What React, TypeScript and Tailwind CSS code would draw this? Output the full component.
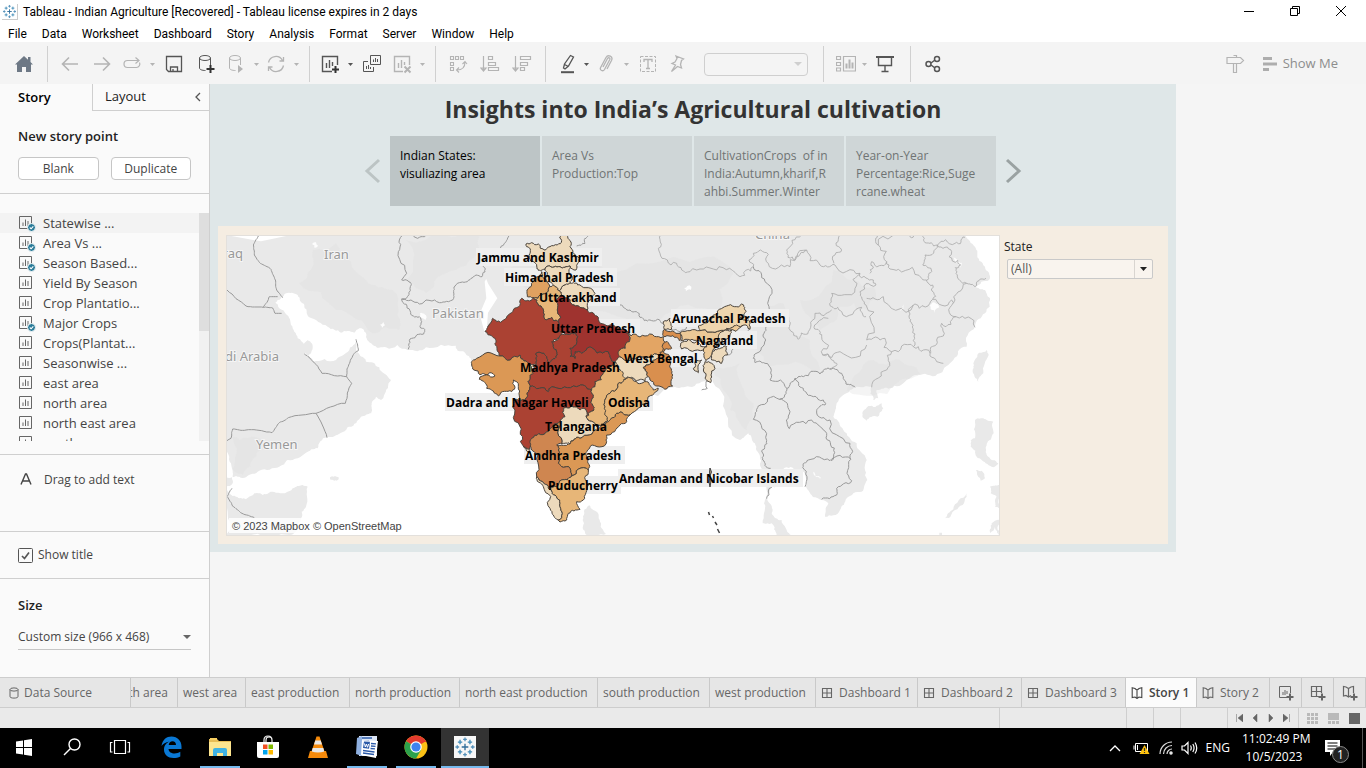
import React, { useState } from "react";
import type { ReactNode } from "react";

/* ---------- map geometry (three units per map pixel) ---------- */

type Pt = [number, number];

const parse = (s: string): Pt[] => s.trim().split(/\s+/).map((p) => p.split(",").map(Number) as Pt);

const noise = (a: number, b: number) => {
  const v = Math.sin(a * 12.9898 + b * 78.233) * 43758.5453;
  return v - Math.floor(v) - 0.5;
};

/* Adds small bends to a coarse line. The offset depends only on the two end points, so shared borders agree. */
function bend(a: Pt, b: Pt, depth: number, amount: number): Pt[] {
  const dx = b[0] - a[0];
  const dy = b[1] - a[1];
  const len = Math.hypot(dx, dy);
  if (depth === 0 || len < 7) return [b];
  const flip = a[0] < b[0] || (a[0] === b[0] && a[1] < b[1]) ? 1 : -1;
  const k = noise(a[0] + b[0], a[1] + b[1]) * amount * flip;
  const m: Pt = [Math.round((a[0] + b[0]) / 2 - dy * k), Math.round((a[1] + b[1]) / 2 + dx * k)];
  return [...bend(a, m, depth - 1, amount), ...bend(m, b, depth - 1, amount)];
}

function rough(s: string, ox: number, oy: number, closed = true, amount = 0.5): string {
  const pts = parse(s).map(([x, y]) => [x + ox, y + oy] as Pt);
  const all = closed ? [...pts, pts[0]] : pts;
  const out: Pt[] = [all[0]];
  for (let i = 1; i < all.length; i++) out.push(...bend(all[i - 1], all[i], 3, amount));
  return "M" + out.map((p) => p.join(",")).join("L") + (closed ? "Z" : "");
}

const WEST: Pt = [0, -15];
const NORTH: Pt = [732, -15];
const NEAST: Pt = [1182, 135];
const SOUTH: Pt = [762, 405];
const EAST: Pt = [1542, -15];

const LAND: [Pt, string][] = [
  [WEST, "0,15 790,15 790,395 735,392 718,370 695,362 690,347 600,352 545,360 480,352 440,345 422,325 412,298 400,295 385,308 345,308 305,290 250,262 235,225 215,195 180,190 165,205 148,218 175,245 195,285 215,325 238,372 262,395 330,390 370,360 388,335 398,370 420,395 460,412 495,450 480,480 465,510 450,500 437,520 436,550 405,560 370,590 345,608 303,622 275,655 240,668 185,690 160,710 100,722 60,742 20,742 15,700 0,650"],
  [WEST, "236,338 246,330 257,340 255,370 243,378 236,366"],
  [WEST, "0,775 30,800 60,808 85,790 110,795 150,788 200,775 230,765 245,770 240,830 225,865 190,915 0,915"],
  [WEST, "0,742 18,742 20,760 0,770"],
  [WEST, "312,742 338,742 338,748 312,748"],
  [EAST, "-790,15 675,15 700,45 712,70 735,110 747,150 708,172 720,178 735,180 750,205 735,250 705,290 680,350 640,390 600,430 540,435 500,450 450,475 410,480 415,505 400,510 395,470 345,472 330,480 290,520 280,560 310,600 350,640 380,690 382,750 365,785 320,805 300,840 255,860 265,820 245,810 215,795 195,770 185,722 140,712 105,740 90,780 82,810 95,850 125,870 152,915 110,915 95,880 68,880 72,820 80,780 68,720 60,680 45,640 25,610 0,630 -45,540 -84,444 -144,471 -195,471 -400,440 -600,400 -790,395"],
  [EAST, "368,545 385,528 425,520 430,535 412,560 380,572 368,562"],
  [EAST, "740,360 746,375 730,430 715,455 698,425 700,400 718,368"],
  [EAST, "705,570 730,565 760,575 755,620 738,650 745,680 775,700 760,712 725,690 710,680 692,650 692,630 705,625"],
  [EAST, "708,720 725,722 735,745 722,752"],
  [EAST, "615,865 640,838 680,790 680,800 645,840"],
  [EAST, "750,770 778,765 778,835 765,830 770,800 752,790"],
  [EAST, "755,880 778,870 778,915 765,890 750,910"],
  [EAST, "598,908 606,908 606,915 598,915"],
  [SOUTH, "314,418 328,406 340,420 360,455 378,492 320,495 312,460"],
];

const SHADE: [Pt, string][] = [
  [WEST, "260,60 330,40 420,150 500,180 520,300 440,310 330,240 220,160"],
  [WEST, "20,620 110,630 90,680 50,735 20,720"],
  [WEST, "540,30 760,20 690,120 600,190 540,150"],
  [EAST, "-700,120 -500,230 -240,270 -60,240 -20,130 -200,80 -480,60"],
  [EAST, "60,250 130,220 210,330 240,420 90,410 30,330"],
  [EAST, "320,480 400,390 480,390 540,430 470,460"],
  [EAST, "280,120 400,170 380,240 300,230 240,300 180,210"],
  [EAST, "-80,420 0,400 40,520 20,600 -30,540"],
];

const LAKES: [Pt, string][] = [
  [WEST, "258,42 268,36 276,48 266,54"],
  [WEST, "582,250 602,262 598,270 588,264"],
  [WEST, "462,284 472,276 477,286 468,294"],
  [NEAST, "192,24 214,20 212,30 198,34"],
  [EAST, "570,225 585,218 598,232 585,248"],
  [EAST, "455,232 480,242 492,222 490,238 472,244"],
  [EAST, "640,80 665,98 660,115 648,95"],
  [EAST, "220,725 242,742 240,748 226,738"],
];

const COUNTRY_LINES: [Pt, string][] = [
  [WEST, "100,15 82,45 85,75 103,100 135,118 148,150 152,180 170,203"],
  [WEST, "3,180 60,228 112,232 140,234 147,250 167,250"],
  [WEST, "112,232 130,200 155,200"],
  [WEST, "235,372 250,382 288,430 362,440 368,405 385,370 397,362 390,328"],
  [WEST, "362,440 377,460 358,520 270,550 187,563 160,578 138,608 122,606 60,600 20,597 15,625 3,632"],
  [WEST, "270,550 303,623"],
  [WEST, "3,800 18,775"],
  [WEST, "3,800 20,828 48,850 85,863"],
  [WEST, "535,15 517,65 527,150 553,157 553,170 527,207 580,222 640,218 683,205 685,178 700,158 735,145 768,140 772,110 800,80 835,40 850,15"],
  [WEST, "527,207 552,242 580,260 582,290 596,298 593,312 557,325 547,358"],
  [WEST, "560,15 570,23 590,20 600,15"],
  [NORTH, "320,48 345,40 352,15"],
  [NORTH, "365,190 420,200 450,225 480,240 510,262 540,270 580,280 600,276"],
  [NEAST, "155,150 200,140 240,140"],
  [NEAST, "322,225 345,180 390,145"],
  [NEAST, "245,330 262,325 258,305 270,300"],
  [EAST, "40,110 75,155 87,230 78,290 77,330 45,372 45,398 75,400 90,450 140,475 118,508 55,528 40,568 80,632 65,662 68,690 92,715"],
  [EAST, "140,475 165,445 190,440 240,432 275,415 310,440 318,462 345,472"],
  [EAST, "165,445 190,475 220,500 250,510 255,525 230,542 270,570 330,640 332,688 270,692 205,690 188,712 195,770"],
  [EAST, "118,508 150,545 148,596 215,570 250,600 272,645 273,692"],
  [EAST, "332,688 335,752 290,775 290,795 245,808"],
  [EAST, "105,770 80,806"],
];

const PROVINCE_LINES: [Pt, string][] = [
  [EAST, "-235,15 -240,70 -190,100 -150,125 -70,120 0,140 40,110 40,70 62,60 85,100 150,110 200,60 240,105 285,105 360,130 400,150 408,165 360,185 378,225 380,330 435,325 455,365 520,350 570,370 610,400"],
  [EAST, "185,15 140,60 165,90 200,62"],
  [EAST, "300,15 305,60 282,100"],
  [EAST, "415,15 415,45 440,95 395,95 390,130"],
  [EAST, "415,45 510,20 525,15"],
  [EAST, "440,95 475,118 545,145 578,165 578,208 525,222 508,265 520,300 520,350"],
  [EAST, "545,15 555,38 592,45 645,40 675,22"],
  [EAST, "592,45 555,75 548,105 575,125 560,150"],
  [EAST, "592,45 635,65 662,105 648,130 680,160 705,170"],
  [EAST, "578,208 635,210 648,260 705,292"],
  [EAST, "680,160 640,220"],
  [EAST, "648,260 605,280 590,330 572,370"],
  [EAST, "360,130 345,175 275,190 275,230 305,245 365,232 378,260"],
  [EAST, "380,205 430,200 520,225"],
  [EAST, "275,240 225,250 205,305 175,328 150,300 140,260"],
  [EAST, "265,265 222,292 245,320 248,375 300,365 380,345"],
  [EAST, "248,375 290,400 270,418"],
  [EAST, "455,365 440,420 395,472"],
  [EAST, "705,170 738,145"],
];

const STATES: [Pt, string, string][] = [
  [NORTH, "#eddabc", "168,42 185,38 205,42 222,60 240,50 262,45 275,32 272,15 292,15 300,50 308,68 328,85 318,120 300,108 270,110 235,108 225,118 200,115 185,95 180,70"],
  [NORTH, "#eddabc", "235,108 270,110 300,108 306,150 285,165 268,182 250,165 228,150 225,118"],
  [NORTH, "#e0a160", "215,125 228,150 240,170 215,195 190,203 172,200 185,165 205,140"],
  [NORTH, "#e7b678", "190,203 215,195 240,170 250,165 268,182 275,195 262,240 272,262 265,275 245,262 230,270 218,235 205,225"],
  [NORTH, "#eddabc", "285,165 305,160 330,165 375,190 355,215 352,240 330,232 300,210 275,195 268,182"],
  [NORTH, "#ab4233", "155,205 190,203 205,225 218,235 230,270 245,262 265,275 275,305 250,330 250,345 262,375 240,398 222,370 198,370 198,405 180,405 150,375 90,378 75,340 60,315 45,305 62,280 68,265 80,275 100,270 130,240"],
  [NORTH, "#ab4233", "250,345 245,335 290,312 318,310 320,330 300,355 300,380 315,385 315,365 350,355 415,365 430,395 400,430 375,455 365,480 320,470 245,470 235,485 180,470 180,440 198,405 198,370 222,370 240,398 262,375"],
  [NORTH, "#9f332f", "275,195 300,210 330,232 352,240 385,262 420,285 465,300 480,320 478,335 448,360 445,395 430,395 415,365 350,355 315,365 315,385 300,380 300,355 320,330 318,310 290,312 275,305 265,275 272,262 262,240"],
  [NORTH, "#db9855", "5,405 20,385 90,378 150,375 180,405 190,430 180,440 180,470 172,500 152,512 140,455 130,450 125,485 85,498 50,475 28,448 75,438 60,428 30,434 12,420"],
  [SOUTH, "#ab4233", "150,50 205,65 215,50 290,50 335,60 335,90 342,120 318,140 312,115 275,108 250,115 255,140 240,155 220,165 200,185 155,205 150,235 130,228 120,170 105,90 122,92 142,80"],
  [SOUTH, "#e7b678", "370,10 400,-25 430,0 440,25 415,40 390,70 375,110 380,155 350,170 318,140 342,120 335,90 335,60 345,35"],
  [NEAST, "#eddabc", "0,230 60,228 110,222 120,228 105,240 70,262 85,290 75,305 45,300 15,295 0,270 -15,245"],
  [NEAST, "#e3a564", "20,160 75,168 130,170 135,205 120,228 110,222 60,228 0,230 -5,215 28,185"],
  [SOUTH, "#e7b678", "440,25 460,32 500,35 520,60 535,55 500,95 450,135 410,130 385,155 375,110 390,70 415,40"],
  [NEAST, "#d98f4e", "130,190 138,185 155,205 130,215 150,245 155,280 158,318 110,318 90,300 85,290 70,262 105,240 120,228"],
  [NEAST, "#d98f4e", "133,148 180,160 178,182 135,170"],
  [NEAST, "#eddabc", "130,125 150,115 155,148 133,148"],
  [NEAST, "#ecc997", "180,158 240,152 300,152 320,145 350,125 385,115 370,135 320,150 290,185 275,225 258,242 250,210 260,200 235,182 182,182"],
  [NEAST, "#eed5ad", "240,152 235,138 265,125 280,105 320,78 365,72 378,95 360,112 385,120 390,148 350,135 320,145 300,152"],
  [NEAST, "#eddabc", "182,190 230,185 260,200 250,210 185,207"],
  [NEAST, "#eddabc", "295,175 335,150 330,165 300,195 285,200"],
  [NEAST, "#eddabc", "285,208 320,200 322,225 305,250 275,240"],
  [NEAST, "#eddabc", "255,245 275,250 285,265 272,308 255,295"],
  [NEAST, "#eddabc", "225,245 245,240 235,278 220,265"],
  [SOUTH, "#eddabc", "275,108 312,115 318,140 350,170 380,155 355,182 300,205 270,222 245,222 240,155 255,140 250,115"],
  [SOUTH, "#db9855", "450,135 420,165 380,195 380,215 330,230 320,260 325,300 275,318 270,295 235,280 235,255 230,225 270,222 300,205 355,182 385,155 410,130"],
  [SOUTH, "#cf8650", "240,155 245,222 230,225 235,255 235,280 270,295 275,318 245,330 230,350 205,350 170,320 155,240 155,205 200,185 220,165"],
  [SOUTH, "#eddabc", "170,320 205,350 225,375 240,410 235,450 210,415 190,350"],
  [SOUTH, "#e7b678", "325,300 325,345 310,390 290,395 300,418 265,430 260,450 240,456 235,450 240,410 225,375 205,350 230,350 245,330 275,318"],
  [SOUTH, "#eddabc", "130,228 150,235 152,258 138,240"],
];

/* text, left, baseline, halo width */
const LABELS: [string, number, number, number][] = [
  ["Jammu and Kashmir", 477, 262, 124],
  ["Himachal Pradesh", 505, 282, 111],
  ["Uttarakhand", 539, 302, 80],
  ["Uttar Pradesh", 551, 333, 88],
  ["Arunachal Pradesh", 672, 323, 116],
  ["Nagaland", 696, 345, 60],
  ["West Bengal", 624, 363, 79],
  ["Madhya Pradesh", 520, 372, 104],
  ["Dadra and Nagar Haveli", 446, 407, 146],
  ["Odisha", 608, 407, 44],
  ["Telangana", 545, 431, 65],
  ["Andhra Pradesh", 525, 460, 99],
  ["Andaman and Nicobar Islands", 619, 483, 183],
  ["Puducherry", 548, 490, 72],
];

function StateMap() {
  return (
    <svg viewBox="226 235 774 301" className="block w-full bg-white outline -outline-offset-1 outline-[#e3e0dc]" role="img" aria-label="Crop area by Indian state">
      <g transform="translate(226 235) scale(0.33333)">
        {LAND.map(([o, s], i) => <path key={i} d={rough(s, o[0], o[1], true, 0.35)} fill="#e9e9e9" />)}
        {SHADE.map(([o, s], i) => <path key={i} d={rough(s, o[0], o[1], true, 0.4)} fill="#dfdfdf" opacity="0.35" />)}
        {LAKES.map(([o, s], i) => <path key={i} d={rough(s, o[0], o[1])} fill="#fdfdfd" />)}
        <g fill="none" stroke="#ababab" strokeWidth="2.500">
          {PROVINCE_LINES.map(([o, s], i) => <path key={i} d={rough(s, o[0], o[1], false, 0.7)} />)}
        </g>
        <g fill="none" stroke="#999" strokeWidth="3">
          {COUNTRY_LINES.map(([o, s], i) => <path key={i} d={rough(s, o[0], o[1], false, i < 8 ? 0.12 : 0.5)} />)}
        </g>
      </g>
      <g fill="#999" stroke="#f5f5f5" strokeWidth="2" paintOrder="stroke" fontFamily="'Noto Sans', sans-serif" fontSize="13">
        <text x="243" y="258" textAnchor="end">Iraq</text>
        <text x="324" y="259">Iran</text>
        <text x="432" y="318">Pakistan</text>
        <text x="279" y="361" textAnchor="end">Saudi Arabia</text>
        <text x="256" y="449">Yemen</text>
        <text x="755" y="239">China</text>
      </g>
      {LABELS.map(([t, x, y, w]) => <rect key={t} x={x - 1} y={y - 14} width={w + 2} height="18" fill="#efefef" />)}
      <g transform="translate(226 235) scale(0.33333)" stroke="#4b443c" strokeWidth="3" strokeLinejoin="round">
        {STATES.map(([o, c, s], i) => <path key={i} d={rough(s, o[0], o[1])} fill={c} />)}
      </g>
      <g fill="#a9987f" stroke="#444" strokeWidth="1">
        <path d="M710 468l1.500 4-1.500 4 1 5-1 6-1-5 1-5-.5-5z" />
        <path d="M708.500 512l1 3M712.500 516l1 2M715 522l2 3M717.500 529l2 4" strokeWidth="1.500" />
      </g>
      <g fontFamily="'Open Sans', sans-serif" fontSize="12" fontWeight="700" fill="#000">
        {LABELS.map(([t, x, y]) => <text key={t} x={x} y={y}>{t}</text>)}
      </g>
      <rect x="229" y="518" width="176" height="15" fill="#fff" opacity="0.8" />
      <text x="232" y="530" fontFamily="'Liberation Sans', sans-serif" fontSize="11" fill="#444">© 2023 Mapbox © OpenStreetMap</text>
    </svg>
  );
}

/* ---------- icons ---------- */

function TableauMark({ className }: { className: string }) {
  const plus = (x: number, y: number, r: number, c: string) => <path key={`${x}${y}`} d={`M${x - r} ${y}h${2 * r}M${x} ${y - r}v${2 * r}`} stroke={c} />;
  return (
    <svg viewBox="0 0 20 20" className={className} strokeWidth="1.200" fill="none" aria-hidden="true">
      {plus(10, 10, 3, "#2f6c99")}
      {plus(10, 3, 1.7, "#5591ba")}{plus(10, 17, 1.7, "#5591ba")}
      {plus(3, 10, 1.7, "#5591ba")}{plus(17, 10, 1.7, "#5591ba")}
      {plus(5.5, 5.5, 2, "#3f8bb8")}{plus(14.5, 5.5, 2, "#3f8bb8")}
      {plus(5.5, 14.5, 2, "#3f8bb8")}{plus(14.5, 14.5, 2, "#3f8bb8")}
    </svg>
  );
}

const Svg = ({ children, size = 20, className = "" }: { children: ReactNode; size?: number; className?: string }) => (
  <svg width={size} height={size} viewBox={`0 0 ${size} ${size}`} fill="none" stroke="currentColor" className={`shrink-0 ${className}`} aria-hidden="true">{children}</svg>
);

const Caret = ({ on = false, narrow = false }: { on?: boolean; narrow?: boolean }) => (
  <span className={`flex justify-center ${narrow ? "w-2" : "w-3"} ${on ? "text-[#555]" : "text-[#b4b4b4]"}`}>
    <svg width="5" height="3" viewBox="0 0 5 3" aria-hidden="true"><path d="M0 0h5L2.500 3z" fill="currentColor" /></svg>
  </span>
);

const Tool = ({ label, on = false, w = "w-8", children }: { label: string; on?: boolean; w?: string; children: ReactNode }) => (
  <button type="button" aria-label={label} className={`flex h-9 shrink-0 items-center justify-center ${w} ${on ? "text-[#555]" : "text-[#b4b4b4]"}`}>
    <Svg>{children}</Svg>
  </button>
);

const Sep = ({ m = "mx-1.5" }: { m?: string }) => <span className={`h-9 w-px shrink-0 bg-[#d0d0d0] ${m}`} />;

const Cylinder = () => (
  <g><ellipse cx="9" cy="4" rx="5.500" ry="2.500" /><path d="M3.500 4v10c0 1.500 2.500 2.500 6 2.500M14.500 4v7" /></g>
);

function Toolbar() {
  return (
    <div role="toolbar" className="flex h-[42px] shrink-0 items-center bg-[#f4f4f4] pt-0.5">
      <button type="button" aria-label="Start page" className="flex h-9 w-[47px] items-center justify-center">
        <Svg><path d="M1 10.500L10 2l4 3.700V3h2.500v5l2.500 2.500h-2V18h-5v-5H8v5H3v-7.500z" fill="#6d7885" stroke="none" /></Svg>
      </button>
      <Sep m="mr-1.5" />
      <Tool label="Undo"><path d="M18 10H3M9 3.500L2.500 10 9 16.500" strokeWidth="1.600" /></Tool>
      <Tool label="Redo"><path d="M2 10h15M11 3.500l6.500 6.500L11 16.500" strokeWidth="1.600" /></Tool>
      <Tool label="Replay" w="w-7"><path d="M17 6.500H5.500a3.500 3.500 0 000 7h9a3.500 3.500 0 003-5M13.500 3.500l3.500 3-3.500 3" strokeWidth="1.200" /></Tool>
      <Caret />
      <Tool label="Save" on><path d="M2.500 2.500h15v15h-13l-2-2zM6.500 17v-4h7v4M9 15v2" strokeWidth="1.300" /></Tool>
      <Tool label="New data source" on><Cylinder /><path d="M14.500 11v8M10.500 15h8" strokeWidth="2" stroke="#333" /></Tool>
      <Tool label="Pause updates" w="w-7"><Cylinder /><path d="M12 11v8l5-4z" fill="currentColor" stroke="none" /></Tool>
      <Caret />
      <Tool label="Run update" w="w-7"><path d="M2.500 8.500a7.500 7.500 0 0114-2M17.500 11.500a7.500 7.500 0 01-14 2M17.500 3v4h-4M2.500 17v-4h4" strokeWidth="1.300" /></Tool>
      <Caret />
      <Sep m="mr-1.5 ml-[7px]" />
      <Tool label="New worksheet" on w="w-7"><path d="M12 17.500H2.500v-15h15V11M6.500 14V9M9.500 14V6M12.500 12V8" strokeWidth="1.400" /><path d="M15.500 12v7M12 15.500h7" strokeWidth="2" stroke="#333" /></Tool>
      <Caret on />
      <Tool label="Duplicate" on><path d="M8.500 1.500h10v9h-10zM6 7.500H1.500v10h10V13M11.500 8V5.500M13.500 8V4M15.500 8V5M4.500 15v-3M6.500 15v-4M8.500 15v-2" /></Tool>
      <Tool label="Clear sheet" w="w-7"><path d="M11 17.500H2.500v-15h15V11M6.500 14V9M9.500 14V6M12.500 11V8" strokeWidth="1.400" /><path d="M12.500 12.500l6 6M18.500 12.500l-6 6" strokeWidth="2" /></Tool>
      <Caret />
      <Sep m="mr-1.5 ml-[7px]" />
      <Tool label="Swap rows and columns"><path d="M2.500 2.500h3v3h-3zM7.500 2.500h3v3h-3zM12.500 2.500h3v3h-3zM2.500 8.500h3v3h-3zM2.500 13.500h3v3h-3zM17 8c0 5-3 8-8 8M14.500 10L17 7.500 19 10M11 13.500L8.500 16l2.500 2.500" strokeWidth="1.100" /></Tool>
      <Tool label="Sort ascending"><path d="M3.500 2v14M1 14l2.500 3L6 14zM8.500 2.500h4v3h-4zM8.500 8.500h7v3h-7zM8.500 13.500h10v3h-10z" strokeWidth="1.200" /></Tool>
      <Tool label="Sort descending"><path d="M3.500 2v14M1 14l2.500 3L6 14zM8.500 2.500h10v3h-10zM8.500 8.500h7v3h-7zM8.500 13.500h4v3h-4z" strokeWidth="1.200" /></Tool>
      <Sep m="mr-2 ml-[7px]" />
      <Tool label="Highlight" on w="w-7"><path d="M12.500 1.500l3 1.500-5 9-3.500 3-1.500-1 1-4zM6.500 10.500l4 2" strokeWidth="1.300" /><path d="M3 18.200h13" strokeWidth="2" /></Tool>
      <Caret on narrow />
      <Tool label="Group members"><path d="M7 13l4.500-8.500c1-1.500 3-.5 2.300 1L8.500 15.500c-1.500 2.500-5 .8-4-1.800L10 3.500c2-3.500 7.500-1 5.500 3L11 15" strokeWidth="1.300" /></Tool>
      <Caret narrow />
      <Tool label="Show mark labels" w="w-9"><path d="M2.500 2.500h15v15h-15z" strokeDasharray="3 1.500" /><path d="M6 8V5.500h8V8M10 5.500v9M8 14.500h4" strokeWidth="1.300" /></Tool>
      <Tool label="Fix axes" w="w-6"><path d="M8 2l7.500 3-2 1.500-1 4 1 3.500-4-1.500-6 5 4-6.500-3.500-1.500 3-1.500 2-3.500z" strokeWidth="1.300" /></Tool>
      <div className="ml-3.5 flex h-[23px] w-[104px] shrink-0 items-center rounded-sm border border-[#cfcfcf]">
        <select aria-label="Fit" disabled className="h-full flex-1 appearance-none bg-transparent"><option></option></select>
        <svg className="mr-[5px]" width="8" height="4" viewBox="0 0 8 4" aria-hidden="true"><path d="M0 0h8L4 4z" fill="#cfcfcf" /></svg>
      </div>
      <Sep m="mr-2 ml-[15px]" />
      <Tool label="Show or hide cards" w="w-7"><path d="M.5 2.500h4v3h-4zM.5 8.500h4v3h-4zM.5 14h4v3h-4zM7.500 2.500h12v14.500h-12z" strokeWidth="1.200" /><path d="M10.500 14.500v-5M13.500 14.500v-9M16.500 14.500v-6" strokeWidth="2" /></Tool>
      <Caret narrow />
      <Tool label="Presentation mode" on w="w-[34px]"><path d="M1 3h18" strokeWidth="2" /><path d="M3.500 3v8.500h13V3M10 12v5M6.500 17.500h7" strokeWidth="1.400" /></Tool>
      <Sep m="mr-1.5 ml-2" />
      <Tool label="Share" on><g strokeWidth="1.500"><circle cx="5.500" cy="10" r="2.500" /><circle cx="14" cy="5" r="2.500" /><circle cx="14" cy="15" r="2.500" /><path d="M8 9l4-3M8 11l4 3" /></g></Tool>
      <div className="flex-1" />
      <Tool label="Guided help"><path d="M8.500 1.500h3v2M2 3.500h13.500l3 3-3 3H2zM8.500 9.500v9h3v-9" strokeWidth="1.200" /></Tool>
      <button type="button" className="mr-7 ml-3 flex items-center gap-1.5 text-[13px] text-[#8d8d8d]">
        <svg width="14" height="14" viewBox="0 0 14 14" fill="#adadad" aria-hidden="true"><path d="M0 0h9v3H0zM0 5.500h14v3H0zM0 11h6v3H0z" /></svg>
        Show Me
      </button>
    </div>
  );
}

const SheetIcon = ({ used = false }: { used?: boolean }) => (
  <Svg size={18} className="text-[#666]">
    <path d="M1.500 2.500h12v12h-12z" /><path d="M5 12V8.500M7.500 12V5.500M10 12V7" />
    {used && <><circle cx="13.500" cy="13.500" r="4" fill="#2d7d9a" stroke="#fafafa" /><path d="M11.800 13.500l1.300 1.300 2.200-2.500" stroke="#fff" strokeWidth="1.100" /></>}
  </Svg>
);
const GridIcon = () => <Svg size={12}><path d="M1.500 1.500h9v9h-9zM6 1.500v9M1.500 6h9" strokeWidth="1.100" /></Svg>;
const BookIcon = () => <Svg size={12}><path d="M1.200.8L4 1.500l2 1.700 2-1.700 2.800-.7v9.700L8 10l-2 1.500L4 10l-2.800.5zM6 3.200v8" strokeWidth="1.100" /></Svg>;

const SHEETS: [string, boolean][] = [
  ["Statewise ...", true], ["Area Vs ...", true], ["Season Based...", true], ["Yield By Season", false],
  ["Crop Plantatio...", false], ["Major Crops", true], ["Crops(Plantat...", false], ["Seasonwise ...", false],
  ["east area", false], ["north area", false], ["north east area", false], ["south area", false],
];

function Sidebar() {
  const [title, setTitle] = useState(true);
  return (
    <aside className="flex w-[210px] shrink-0 flex-col border-r border-[#cfcfcf] bg-[#fafafa] text-[12px] text-[#444]">
      <div className="flex h-[27px] shrink-0 text-[13px]">
        <button type="button" className="w-[92px] pl-[18px] text-left font-semibold text-black">Story</button>
        <button type="button" className="flex flex-1 items-center justify-between border-b border-l border-[#cfcfcf] pr-1.5 pl-3 text-[#222]">
          Layout
          <Svg size={10} className="text-[#555]"><path d="M7 1L3 5l4 4" strokeWidth="1.300" /></Svg>
        </button>
      </div>
      <section className="h-[83px] shrink-0 border-b border-[#cfcfcf] px-[18px] pt-4">
        <h2 className="text-[13px] leading-[18px] font-semibold text-[#222]">New story point</h2>
        <div className="mt-3 flex gap-3">
          <button type="button" className="h-[23px] flex-1 rounded-sm border border-[#c6c6c6] bg-white">Blank</button>
          <button type="button" className="h-[23px] flex-1 rounded-sm border border-[#c6c6c6] bg-white">Duplicate</button>
        </div>
      </section>
      <div className="mt-[19px] flex h-[228px] shrink-0">
        <ul className="flex-1 overflow-hidden">
          {SHEETS.map(([name, used], i) => (
            <li key={name} className={`flex h-5 items-center gap-[7px] pl-[18px] ${i === 0 ? "bg-[#f3f3f3]" : ""}`}>
              <SheetIcon used={used} />
              <a href="#sheet" className="text-[13px] leading-5">{name}</a>
            </li>
          ))}
        </ul>
        <div className="w-2.5 bg-[#f1f1f1]"><div className="h-[118px] bg-[#dedede]" /></div>
      </div>
      <div className="mt-[13px] flex h-[78px] shrink-0 items-start gap-3 border-y border-[#cfcfcf] pt-4 pl-5">
        <Svg size={12} className="mt-0.5"><path d="M1 11.500L5.500 1h1L11 11.500M2.800 8h6.500" strokeWidth="1.400" /></Svg>
        <span className="leading-[18px]">Drag to add text</span>
      </div>
      <label className="flex h-[47px] shrink-0 items-center gap-[5px] border-b border-[#cfcfcf] pl-[18px]">
        <input type="checkbox" checked={title} onChange={(e) => setTitle(e.target.checked)} className="peer sr-only" />
        <Svg size={15} className="text-[#555]"><rect x=".5" y=".5" width="14" height="14" rx="1" />{title && <path d="M4 8l2.500 2.500L11 4.500" strokeWidth="1.700" />}</Svg>
        Show title
      </label>
      <div className="px-[18px] pt-[17px]">
        <label htmlFor="size" className="block text-[13px] leading-[18px] font-semibold text-[#222]">Size</label>
        <div className="mt-[11px] flex items-center border-b border-[#c6c6c6]">
          <select id="size" className="h-6 flex-1 appearance-none bg-transparent text-[12px]"><option>Custom size (966 x 468)</option></select>
          <svg width="8" height="4" viewBox="0 0 8 4" aria-hidden="true"><path d="M0 0h8L4 4z" fill="#666" /></svg>
        </div>
      </div>
    </aside>
  );
}

const POINTS = [
  ["Indian States:", "visuliazing area"],
  ["Area Vs", "Production:Top"],
  ["CultivationCrops  of in", "India:Autumn,kharif,R", "ahbi.Summer.Winter"],
  ["Year-on-Year", "Percentage:Rice,Suge", "rcane.wheat"],
];

function Story() {
  return (
    <main className="min-w-0 flex-1 overflow-hidden bg-[#f5f5f5]">
      <article className="h-[468px] w-[966px] bg-[#dfe7e8] px-2 pt-2">
        <h1 className="text-center text-[23px] leading-[34px] font-bold text-[#333]">Insights into India’s Agricultural cultivation</h1>
        <nav aria-label="Story points" className="mt-2.5 flex items-center justify-center gap-[9px]">
          <button type="button" aria-label="Previous"><svg width="17" height="26" viewBox="0 0 17 26" fill="none" stroke="#bcc4c4" strokeWidth="3" aria-hidden="true"><path d="M15 2L3 13l12 11" /></svg></button>
          <div className="flex gap-0.5">
            {POINTS.map((lines, i) => (
              <button key={lines[0]} type="button" className={`flex h-[70px] w-[150px] flex-col items-start overflow-hidden px-2.5 pt-[11px] text-left text-[12px] leading-[18px] whitespace-pre ${i === 0 ? "bg-[#bdc5c6] text-black" : "bg-[#cfd6d7] text-[#6f7474]"}`}>
                {lines.map((l) => <span key={l}>{l}</span>)}
              </button>
            ))}
          </div>
          <button type="button" aria-label="Next"><svg width="17" height="26" viewBox="0 0 17 26" fill="none" stroke="#9aa2a2" strokeWidth="3" aria-hidden="true"><path d="M2 2l12 11L2 24" /></svg></button>
        </nav>
        <section className="mt-5 flex h-[318px] gap-1 bg-[#f5ede2] px-2 pt-2">
          <div className="w-[774px] shrink-0 pt-px"><StateMap /></div>
          <div className="pt-[3px]">
            <label htmlFor="state" className="block text-[12px] leading-5 text-[#222]">State</label>
            <div className="mt-0.5 ml-[3px] flex h-5 w-[146px] items-center rounded-xs border border-[#c9c9c9] bg-[#f9f4ee] text-[#555]">
              <select id="state" className="h-full flex-1 appearance-none pl-[3px] text-[12px] leading-[18px]"><option>(All)</option></select>
              <span className="flex h-full w-[18px] items-center justify-center border-l border-[#d9d5d0]"><svg width="7" height="4" viewBox="0 0 7 4" aria-hidden="true"><path d="M0 0h7L3.500 4z" fill="#222" /></svg></span>
            </div>
          </div>
        </section>
      </article>
    </main>
  );
}

const TABS: [string, string, string][] = [
  ["west area", "w-[68px]", ""], ["east production", "w-[104px]", ""], ["north production", "w-[110px]", ""],
  ["north east production", "w-[138px]", ""], ["south production", "w-[112px]", ""], ["west production", "w-[106px]", ""],
  ["Dashboard 1", "w-[102px]", "grid"], ["Dashboard 2", "w-[104px]", "grid"], ["Dashboard 3", "w-[104px]", "grid"],
  ["Story 1", "w-[71px]", "book"], ["Story 2", "w-[73px]", "book"],
];

function SheetTabs() {
  const tab = "flex h-full shrink-0 items-center border-r border-[#c9c9c9] whitespace-nowrap";
  return (
    <nav aria-label="Sheets" className="flex h-[31px] shrink-0 overflow-hidden border-y border-[#cdcdcd] bg-[#e6e6e6] text-[12px] text-[#666]">
      <button type="button" className={`${tab} w-[131px] gap-1 pl-2`}>
        <Svg size={12}><ellipse cx="6" cy="2.500" rx="4" ry="1.600" /><path d="M2 2.500v7c0 1 1.500 1.600 4 1.600s4-.6 4-1.600v-7" /></Svg>
        Data Source
      </button>
      <button type="button" className={`${tab} w-[47px] justify-end overflow-hidden pr-[9px]`}>north area</button>
      {TABS.map(([t, w, icon]) => (
        <button key={t} type="button" className={`${tab} ${w} gap-1.5 pl-[5px] ${t === "Story 1" ? "bg-[#fbfbfb] font-semibold text-[#444]" : ""}`}>
          {icon === "grid" && <GridIcon />}{icon === "book" && <BookIcon />}{t}
        </button>
      ))}
      {["worksheet", "dashboard", "story"].map((k) => (
        <button key={k} type="button" aria-label={`New ${k}`} className={`${tab} w-8 justify-center`}>
          <Svg size={16}>
            {k === "worksheet" && <path d="M9 12.500H1.500v-11h11V8M5 10V7M7 10V5M9 9V6" />}
            {k === "dashboard" && <path d="M9 11.500H1.500v-10h10V8M6.500 1.500v10M1.500 6.500h10" strokeWidth="1.200" />}
            {k === "story" && <path d="M9 10.500L6.500 12 4 10.500 1.500 11V1.500L4 2l2.500 1.500L9 2l2.500-.5V8M6.500 3.500V12" strokeWidth="1.200" />}
            <path d="M12 8.500v7M8.500 12h7" strokeWidth="2" />
          </Svg>
        </button>
      ))}
    </nav>
  );
}

function StatusBar() {
  return (
    <div className="flex h-5 shrink-0 justify-end bg-[#eaeaea] text-[#666]">
      <span className="w-[127px] border-l border-[#cfcfcf]" />
      <span className="w-[27px] border-l border-[#cfcfcf]" />
      <span className="w-[27px] border-l border-[#cfcfcf]" />
      <span className="w-[47px] border-l border-[#cfcfcf]" />
      <div className="flex w-[71px] items-center justify-between border-l border-[#cfcfcf] px-[7px]">
        {["M1.500 0v8M8 0L3 4l5 4z", "M6 0L2 4l4 4z", "M2 0l4 4-4 4z", "M6.500 0v8M0 0l5 4-5 4z"].map((d, i) => (
          <button key={d} type="button" aria-label={["First", "Previous", "Next", "Last"][i]}>
            <svg width="8" height="8" viewBox="0 0 8 8" fill="currentColor" stroke="currentColor" strokeWidth=".5" aria-hidden="true"><path d={d} /></svg>
          </button>
        ))}
      </div>
      <div className="flex w-[68px] items-center justify-between border-l border-[#cfcfcf] pr-1.5 pl-2">
        <svg width="11" height="11" viewBox="0 0 11 11" fill="#b9b9b9" aria-hidden="true"><path d="M0 0h3v3H0zM4 0h3v3H4zM8 0h3v3H8zM0 4h3v3H0zM4 4h3v3H4zM8 4h3v3H8zM0 8h3v3H0zM4 8h3v3H4zM8 8h3v3H8z" /></svg>
        <svg width="11" height="11" viewBox="0 0 11 11" fill="#b9b9b9" aria-hidden="true"><path d="M0 0h11v7H0zM0 8h3v3H0zM4 8h3v3H4zM8 8h3v3H8z" /></svg>
        <svg width="11" height="11" viewBox="0 0 11 11" fill="#666" aria-hidden="true"><path d="M0 0h11v11H0z" /></svg>
      </div>
    </div>
  );
}

const App24 = ({ children }: { children: ReactNode }) => <svg width="24" height="24" viewBox="0 0 24 24" fill="none" aria-hidden="true">{children}</svg>;

function Taskbar() {
  const btn = "flex h-full shrink-0 items-center justify-center border-b-2";
  return (
    <footer className="flex h-10 shrink-0 items-center bg-black text-white">
      <button type="button" aria-label="Start" className={`${btn} w-12 border-transparent`}><App24><path d="M4 6.500l7-1v6.500H4zM12 5.300l8-1.300v8h-8zM4 13h7v6.500l-7-1zM12 13h8v8l-8-1.300z" fill="#fff" /></App24></button>
      <button type="button" aria-label="Search" className={`${btn} w-12 border-transparent`}><App24><g stroke="#fff" strokeWidth="1.400"><circle cx="14.500" cy="9.500" r="5.500" /><path d="M10.500 13.500L4 20" /></g></App24></button>
      <button type="button" aria-label="Task view" className={`${btn} w-12 border-transparent`}><App24><path d="M6.500 5.500h11v13h-11zM4.500 7.500h-2v9.500h2M19.500 7.500h2v9.500h-2" stroke="#fff" strokeWidth="1.200" /></App24></button>
      <button type="button" aria-label="Edge" className={`${btn} ml-1 w-12 border-transparent`}>
        <App24><path d="M1.500 11C2.500 4.500 6.500 1.500 11.500 1.500c6 0 10 4.500 10 10V14h-13c.2 3 3 4.500 6 4.500 2.200 0 4-.6 5.800-1.700v4.700c-2 1.100-4.300 1.500-6.800 1.500-5.500 0-9.500-3.200-9.500-8.500 0-4 2.500-6.800 5.500-8C5.500 7 3 9 1.500 11zM8.700 10H16c0-2.500-1.300-3.800-3.500-3.800-2 0-3.600 1.600-3.800 3.800z" fill="#0a78d4" /></App24>
      </button>
      <button type="button" aria-label="File Explorer" className={`${btn} ml-1 w-10 border-[#76b9ed]`}>
        <App24><path d="M1 4h8l2 2h12v15H1z" fill="#e8bd56" /><path d="M1 7h22v14H1z" fill="#fde58f" /><path d="M2 3h7v2H2z" fill="#f7cf62" /><path d="M5 21v-6q0-2 2-2h10q2 0 2 2v6h-4v-3H9v3z" fill="#3fb2e3" /></App24>
      </button>
      <button type="button" aria-label="Store" className={`${btn} ml-1 w-12 border-transparent`}>
        <App24><path d="M8 7V5q0-4 4-4t4 4v2M10 7V5q0-3 3-3t3 3v2" stroke="#eee" strokeWidth="1.200" /><path d="M1 7h22v14q0 2-2 2H3q-2 0-2-2z" fill="#fff" /><path d="M7 9.500h4.500V14H7z" fill="#f25022" /><path d="M12.500 9.500H17V14h-4.500z" fill="#7fba00" /><path d="M7 15h4.500v4.500H7z" fill="#00a4ef" /><path d="M12.500 15H17v4.500h-4.500z" fill="#ffb900" /></App24>
      </button>
      <button type="button" aria-label="VLC" className={`${btn} w-[51px] border-transparent`}>
        <App24><path d="M4 16h16l2 7H2z" fill="#f58a0b" /><path d="M10.500 1.500h3L19 18q-7 4-14 0z" fill="#f58a0b" /><path d="M9.300 5.500h5.400l1.300 4H8zM6.700 13h10.600l1 3.500q-6.300 2-12.600 0z" fill="#e8e8e8" /></App24>
      </button>
      <button type="button" aria-label="Word" className={`${btn} ml-1 w-10 border-[#76b9ed]`}>
        <App24><path d="M4 1h18v20H4z" fill="#dbe5f5" /><path d="M5 3h12M4 6h10" stroke="#2b5aa8" strokeWidth="1.300" /><path d="M2 3l5-2v20l-6-2z" fill="#8fb0e0" /><path d="M7 5l16 1-2 17-15-3z" fill="#fff" /><path d="M9 6.500l6 .3-1 7-6-.8z" fill="#2b5aa8" /><path d="M9.500 8.500l.8 3.500 1.200-3 1 3.300 1.200-3.300" stroke="#fff" /><path d="M16 8.500l5 .3M16 11l4.500.3M15.500 13.500l4.500.4M8 15.500l11.500 1.500M8 18l11 1.500" stroke="#2b5aa8" strokeWidth="1.300" /></App24>
      </button>
      <button type="button" aria-label="Chrome" className={`${btn} ml-[9px] w-10 border-[#76b9ed]`}>
        <App24><circle cx="12" cy="12" r="11.500" fill="#fbc116" /><path d="M12 12L2.050 6.250A11.500 11.500 0 0121.950 6.250z" fill="#e33b2e" /><path d="M2.050 6.250A11.500 11.500 0 0012 23.500L17 15l-5-3z" fill="#2ca14c" /><path d="M12 6.500h10.200" stroke="#e33b2e" /><circle cx="12" cy="12" r="5.800" fill="#fff" /><circle cx="12" cy="12" r="4.600" fill="#3f83f0" /></App24>
      </button>
      <button type="button" aria-label="Tableau" className={`${btn} ml-[5px] w-12 border-[#76b9ed] bg-[#333]`}><TableauMark className="h-[22px] w-[22px] bg-[#f7f7f7]" /></button>
      <div className="flex-1" />
      <div className="flex items-center gap-2">
        <svg width="12" height="8" viewBox="0 0 12 8" fill="none" stroke="#fff" strokeWidth="1.300" aria-hidden="true"><path d="M1 7l5-5 5 5" /></svg>
        <svg className="ml-1" width="18" height="16" viewBox="0 0 18 16" fill="none" aria-hidden="true"><path d="M2.500 3.500h12v8h-12zM1 5.500v4M4.500 5v5" stroke="#fff" /><path d="M11.500 5l5 9h-10z" fill="#ffc20e" /><path d="M11.500 8v3M11.500 12v1" stroke="#333" strokeWidth="1.200" /></svg>
        <svg width="14" height="14" viewBox="0 0 14 14" fill="none" stroke="#ddd" strokeWidth="1.200" aria-hidden="true"><path d="M1 13A12 12 0 0113 1M4.500 13A8.500 8.500 0 0113 4.500M8 13a5 5 0 015-5" /><circle cx="12" cy="12" r="1.200" fill="#fff" /></svg>
        <svg width="17" height="14" viewBox="0 0 17 14" fill="none" stroke="#fff" strokeWidth="1.200" aria-hidden="true"><path d="M1 5h2.500L7 1.500v11L3.500 9H1zM9.500 4.500q1.500 2.500 0 5M11.800 3q2.500 4 0 8M14 1.500q3.500 5.500 0 11" /></svg>
        <span className="text-[12px]">ENG</span>
      </div>
      <div className="ml-3 w-[64px] text-center text-[12px] leading-[18px] whitespace-nowrap">
        <div>11:02:49 PM</div>
        <div>10/5/2023</div>
      </div>
      <button type="button" aria-label="Notifications, 1 new" className="relative ml-[18px] flex h-10 w-[38px] items-center">
        <svg width="17" height="18" viewBox="0 0 17 18" aria-hidden="true"><path d="M1 1h15v12H9l-3 4v-4H1z" fill="#fff" /><path d="M3.500 4h10M3.500 7h10M3.500 10h10" stroke="#000" strokeWidth="1.200" /></svg>
        <span className="absolute top-[18px] left-2 flex h-[17px] w-[17px] items-center justify-center rounded-full border border-[#8a8a8a] bg-[#222] text-[12px] leading-none">1</span>
      </button>
      <span className="h-full w-1 border-l border-[#555]" />
    </footer>
  );
}

const MENUS = ["File", "Data", "Worksheet", "Dashboard", "Story", "Analysis", "Format", "Server", "Window", "Help"];

export default function App() {
  return (
    <div className="flex h-screen flex-col overflow-hidden bg-[#f5f5f5] font-['Open_Sans','Noto_Sans',sans-serif]">
      <header className="flex h-[22px] shrink-0 items-center bg-white pt-0.5 pl-0.5 font-[Roboto,sans-serif] text-[12px] text-black">
        <TableauMark className="h-4 w-4 border-r border-b border-[#ccc]" />
        <span className="ml-[5px] flex-1">Tableau - Indian Agriculture [Recovered] - Tableau license expires in 2 days</span>
        <div className="flex pr-0.5 pb-0.5 text-black">
          {["M0 5.500h10", "M.5 2.500h7v7h-7zM2.500 2.500v-2h7v7h-2", "M0 0l10 10M10 0L0 10"].map((d, i) => (
            <button key={d} type="button" aria-label={["Minimise", "Restore", "Close"][i]} className="flex h-5 w-[46px] items-center justify-center">
              <svg width="10" height="10" viewBox="0 0 10 10" fill="none" stroke="currentColor" aria-hidden="true"><path d={d} /></svg>
            </button>
          ))}
        </div>
      </header>
      <nav aria-label="Menu" className="flex h-5 shrink-0 items-center gap-[15px] bg-white px-2 pt-1 font-[Roboto,sans-serif] text-[12px] text-black">
        {MENUS.map((m) => <button key={m} type="button">{m}</button>)}
      </nav>
      <Toolbar />
      <div className="flex min-h-0 flex-1">
        <Sidebar />
        <Story />
      </div>
      <SheetTabs />
      <StatusBar />
      <Taskbar />
    </div>
  );
}
